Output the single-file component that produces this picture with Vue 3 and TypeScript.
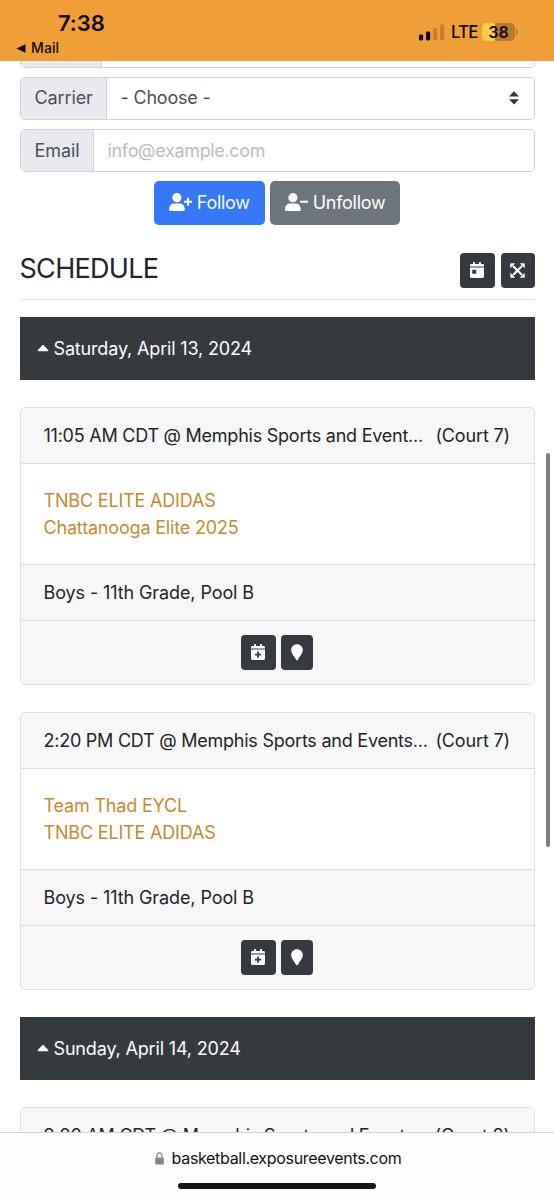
<script setup lang="ts">
interface Game {
  title: string
  court: string
  teams: string[]
  division: string
}

interface Day {
  label: string
  games: Game[]
}

const days: Day[] = [
  {
    label: 'Saturday, April 13, 2024',
    games: [
      {
        title: '11:05 AM CDT @ Memphis Sports and Event...',
        court: '(Court 7)',
        teams: ['TNBC ELITE ADIDAS', 'Chattanooga Elite 2025'],
        division: 'Boys - 11th Grade, Pool B',
      },
      {
        title: '2:20 PM CDT @ Memphis Sports and Events...',
        court: '(Court 7)',
        teams: ['Team Thad EYCL', 'TNBC ELITE ADIDAS'],
        division: 'Boys - 11th Grade, Pool B',
      },
    ],
  },
  {
    label: 'Sunday, April 14, 2024',
    games: [
      {
        title: '9:00 AM CDT @ Memphis Sports and Events...',
        court: '(Court 8)',
        teams: [],
        division: '',
      },
    ],
  },
]
</script>

<template>
  <div class="screen">
    <header class="status">
      <div class="status-left">
        <div class="time">7:38</div>
        <div class="back">
          <svg width="10" height="9" viewBox="0 0 10 9"><path d="M9.5 0.3v8.4L0.4 4.5z" fill="#0d0903" /></svg>
          <span>Mail</span>
        </div>
      </div>
      <div class="status-right">
        <svg class="signal" width="26" height="17" viewBox="0 0 26 17">
          <rect x="0" y="10.4" width="4.2" height="6" rx="1.3" fill="#0d0903" />
          <rect x="7" y="7.4" width="4.2" height="9" rx="1.3" fill="#0d0903" />
          <rect x="14" y="4" width="4.2" height="12.4" rx="1.3" fill="#c67f2b" />
          <rect x="21" y="0.6" width="4.2" height="15.8" rx="1.3" fill="#c67f2b" />
        </svg>
        <span class="lte">LTE</span>
        <span class="battery">38</span>
        <span class="battery-tip"></span>
      </div>
    </header>

    <main class="page">
      <div class="field clipped"><span class="addon phone"></span></div>
      <div class="field carrier">
        <span class="addon">Carrier</span>
        <span class="value choose">- Choose -</span>
        <svg class="carets" width="10" height="14" viewBox="0 0 10 14">
          <path d="M5 0.3L10 5.6H0zM5 13.4L10 8.2H0z" fill="#32383d" />
        </svg>
      </div>
      <div class="field email">
        <span class="addon">Email</span>
        <span class="value placeholder">info@example.com</span>
      </div>

      <div class="actions">
        <button class="btn follow">
          <svg width="23" height="19" viewBox="0 0 23 19" fill="#fff">
            <circle cx="7.9" cy="4.7" r="4.6" />
            <path d="M0 16.6c0-3.8 2-6.2 4.9-6.2h6c2.9 0 4.9 2.4 4.9 6.2 0 .9-.7 1.5-1.5 1.5H1.5C.7 18.1 0 17.5 0 16.6z" />
            <path d="M18 4.700h2v3h3v2h-3v3h-2v-3h-3v-2h3z" />
          </svg>
          <span>Follow</span>
        </button>
        <button class="btn unfollow">
          <svg width="23" height="19" viewBox="0 0 23 19" fill="#fff">
            <circle cx="7.9" cy="4.7" r="4.6" />
            <path d="M0 16.6c0-3.8 2-6.2 4.9-6.2h6c2.9 0 4.9 2.4 4.9 6.2 0 .9-.7 1.5-1.5 1.5H1.5C.7 18.1 0 17.5 0 16.6z" />
            <rect x="15" y="7.700" width="8" height="2" rx=".5" />
          </svg>
          <span>Unfollow</span>
        </button>
      </div>

      <div class="heading">
        <h2>SCHEDULE</h2>
        <div class="tools">
          <button class="icon-btn">
            <svg width="14" height="17" viewBox="0 0 14 17">
              <path d="M1.4 2H3V.8C3 .4 3.3.1 3.7.1h.6c.4 0 .7.3.7.7V2h4V.8c0-.4.3-.7.7-.7h.6c.4 0 .7.3.7.7V2h1.6C13.4 2 14 2.6 14 3.4v1.2H0V3.4C0 2.6.6 2 1.4 2zM0 5.6h14v8.9c0 .8-.6 1.4-1.4 1.4H1.4C.6 15.9 0 15.3 0 14.5z" fill="#fff" />
              <rect x="2.2" y="7.7" width="4" height="4" rx=".4" fill="#343a40" />
            </svg>
          </button>
          <button class="icon-btn">
            <svg width="15" height="15" viewBox="0 0 15 15">
              <path d="M3 3l9 9M12 3l-9 9" stroke="#fff" stroke-width="2.1" />
              <path d="M.3.9C.3.5.6.3.9.3h4.3L.3 5.2zM14.7.9c0-.4-.3-.6-.6-.6H9.8l4.9 4.9zM.3 14.1c0 .4.3.6.6.6h4.3L.3 9.8zM14.7 14.1c0 .4-.3.6-.6.6H9.8l4.9-4.9z" fill="#fff" />
            </svg>
          </button>
        </div>
      </div>

      <section v-for="day in days" :key="day.label" class="day">
        <div class="day-bar">
          <svg width="12" height="7" viewBox="0 0 12 7"><path d="M5.3.3a1 1 0 0 1 1.4 0l4.4 4.6c.5.5.2 1.3-.5 1.3H1.4c-.7 0-1-.8-.5-1.3z" fill="#fff" /></svg>
          <span>{{ day.label }}</span>
        </div>
        <article v-for="game in day.games" :key="game.title" class="card">
          <div class="card-head">
            <span class="title">{{ game.title }}</span>
            <span class="court">{{ game.court }}</span>
          </div>
          <div class="card-body">
            <a v-for="team in game.teams" :key="team">{{ team }}</a>
          </div>
          <div class="card-row">{{ game.division }}</div>
          <div class="card-foot">
            <button class="icon-btn">
              <svg width="14" height="17" viewBox="0 0 14 17">
                <path d="M1.4 2H3V.8C3 .4 3.3.1 3.7.1h.6c.4 0 .7.3.7.7V2h4V.8c0-.4.3-.7.7-.7h.6c.4 0 .7.3.7.7V2h1.6C13.4 2 14 2.6 14 3.4v1.2H0V3.4C0 2.6.6 2 1.4 2zM0 5.6h14v8.9c0 .8-.6 1.4-1.4 1.4H1.4C.6 15.9 0 15.3 0 14.5z" fill="#fff" />
                <path d="M7 7.6v6.2M3.9 10.7h6.2" stroke="#343a40" stroke-width="1.8" />
              </svg>
            </button>
            <button class="icon-btn pin">
              <svg width="12" height="17" viewBox="0 0 12 17"><path d="M6 .3c3.3 0 5.8 2.5 5.8 5.7 0 2.7-1.3 4-5.1 10.1-.3.5-1.1.5-1.4 0C1.5 10 .2 8.7.2 6 .2 2.8 2.7.3 6 .3z" fill="#fff" /></svg>
            </button>
          </div>
        </article>
      </section>
    </main>

    <div class="scrollbar"></div>

    <footer class="browser">
      <div class="address">
        <svg width="9" height="13" viewBox="0 0 9 13">
          <path d="M2 6V3.6C2 1.9 3 .8 4.5.8S7 1.9 7 3.6V6" fill="none" stroke="#858585" stroke-width="1.2" />
          <rect x="0.2" y="5.5" width="8.6" height="7" rx="1.3" fill="#858585" />
        </svg>
        <span>basketball.exposureevents.com</span>
      </div>
      <div class="home"></div>
    </footer>
  </div>
</template>

<style>
html,
body {
  margin: 0;
  background: #fff;
}
</style>

<style scoped>
* {
  box-sizing: border-box;
}
.screen {
  position: relative;
  width: 554px;
  height: 1200px;
  overflow: hidden;
  display: flex;
  flex-direction: column;
  background: #fff;
  color: #212529;
  font-family: Inter, 'Liberation Sans', sans-serif;
  font-size: 18px;
  line-height: 27px;
}
svg {
  display: block;
  flex: none;
}
span {
  white-space: nowrap;
}
.status {
  height: 61px;
  flex: none;
  display: flex;
  justify-content: space-between;
  background: #f09f38;
  color: #0d0903;
}
.status-left {
  padding: 10px 0 0 16px;
}
.time {
  padding-left: 42px;
  font-size: 22px;
  font-weight: 600;
  line-height: 27px;
  letter-spacing: -0.1px;
}
.back {
  display: flex;
  align-items: center;
  gap: 5px;
  margin-top: 2px;
  font-size: 14px;
  font-weight: 500;
  line-height: 18px;
  letter-spacing: 0.1px;
}
.status-right {
  display: flex;
  align-items: center;
  height: 18px;
  margin-top: 23px;
  padding-right: 36px;
}
.lte {
  margin-left: 6px;
  width: 31px;
  font-size: 17px;
  font-weight: 500;
  letter-spacing: -0.9px;
}
.battery {
  width: 33px;
  height: 18px;
  border-radius: 5px;
  background: linear-gradient(90deg, #f7d046 39%, #b87a2e 39%);
  text-align: center;
  font-size: 16px;
  font-weight: 600;
  line-height: 18px;
}
.battery-tip {
  width: 2px;
  height: 6px;
  margin-left: 1px;
  border-radius: 0 2px 2px 0;
  background: #b87a2e;
}
.page {
  flex: 1;
  min-height: 0;
  overflow: hidden;
  padding: 0 19px 0 19.5px;
}
.field {
  display: flex;
  align-items: center;
  height: 43px;
  margin-bottom: 9px;
  border: 1.4px solid #d0d3da;
  border-radius: 5px;
  overflow: hidden;
  color: #495057;
}
.addon {
  align-self: stretch;
  display: flex;
  align-items: center;
  padding: 0 14px;
  background: #e9eaf0;
  border-right: 1px solid #d0d3da;
  letter-spacing: -0.1px;
}
.field.clipped {
  height: 7px;
  border-top: 0;
  border-radius: 0 0 5px 5px;
}
.phone {
  width: 81px;
}
.carrier .addon {
  width: 86px;
  padding-bottom: 2px;
}
.carrier .value {
  padding-bottom: 2px;
  letter-spacing: -0.2px;
}
.email .addon {
  width: 73px;
}
.value {
  flex: 1;
  padding-left: 14px;
}
.placeholder {
  color: #b9bcc3;
  letter-spacing: -0.33px;
}
.carets {
  margin-right: 15px;
  margin-bottom: 2px;
}
.actions {
  display: flex;
  justify-content: center;
  gap: 5px;
}
button {
  border: 0;
  padding: 0;
  font: inherit;
  color: #fff;
}
.btn {
  display: flex;
  align-items: center;
  height: 44px;
  padding: 0 0 2px 14.5px;
  gap: 5px;
  border-radius: 5px;
  letter-spacing: -0.28px;
}
.follow {
  width: 111px;
  background: #3478f6;
}
.unfollow {
  width: 130px;
  background: #6d757c;
}
.heading {
  display: flex;
  align-items: center;
  justify-content: space-between;
  height: 75px;
  padding-top: 17px;
  border-bottom: 1.4px solid #e3e5e8;
}
h2 {
  margin: -4px 0 0;
  font-size: 27px;
  font-weight: 400;
  letter-spacing: -0.7px;
}
.tools {
  display: flex;
  gap: 6px;
}
.icon-btn {
  display: flex;
  align-items: center;
  justify-content: center;
  width: 34.5px;
  height: 35px;
  border-radius: 4px;
  background: #343a40;
}
.pin {
  width: 32px;
}
.day-bar {
  display: flex;
  align-items: center;
  height: 63px;
  margin: 17px 0 27px;
  padding-left: 17.5px;
  gap: 4.5px;
  background: #343a3e;
  color: #fff;
  letter-spacing: -0.16px;
}
.day + .day .day-bar {
  margin-top: 0;
}
.card {
  margin-bottom: 27px;
  border: 1.4px solid #dfdfdf;
  border-radius: 5px;
  overflow: hidden;
  background: #f7f7f7;
}
.card-head {
  display: flex;
  justify-content: space-between;
  align-items: center;
  height: 56px;
  padding: 0 24px 0 23px;
  border-bottom: 1px solid #dcdcdc;
}
.title {
  letter-spacing: -0.24px;
}
.court {
  letter-spacing: -0.15px;
}
.card-body {
  display: flex;
  flex-direction: column;
  height: 100px;
  padding-top: 23px;
  background: #fff;
  color: #c38b31;
  letter-spacing: -0.18px;
}
.card-body a,
.card-row {
  padding-left: 23px;
}
.card-row {
  display: flex;
  align-items: center;
  height: 56px;
  border-top: 1px solid #dcdcdc;
  letter-spacing: -0.1px;
}
.card-foot {
  display: flex;
  align-items: center;
  justify-content: center;
  gap: 5px;
  height: 64px;
  padding: 0 1px 1px 0;
  border-top: 1px solid #dcdcdc;
}
.scrollbar {
  position: absolute;
  left: 546px;
  top: 453px;
  width: 4px;
  height: 394px;
  border-radius: 2px;
  background: #7e7e7e;
}
.browser {
  flex: none;
  height: 68px;
  border-top: 1.4px solid #d6d6d6;
  background: #fdfdfd;
  color: #111;
}
.address {
  display: flex;
  align-items: center;
  justify-content: center;
  gap: 8px;
  padding: 14px 0 0 2px;
  font-size: 16px;
  line-height: 22px;
  letter-spacing: -0.32px;
}
.home {
  width: 198px;
  height: 6px;
  margin: 14px auto 0;
  border-radius: 3px;
  background: #161616;
}
</style>
